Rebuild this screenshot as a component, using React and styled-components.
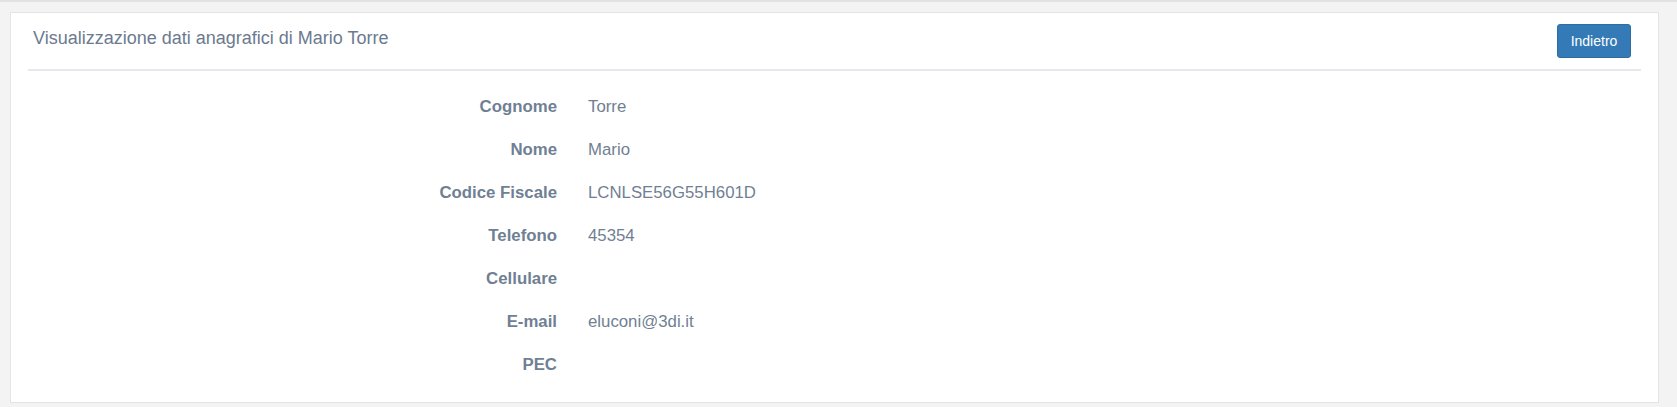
import React from "react";
import styled, { createGlobalStyle } from "styled-components";

const Global = createGlobalStyle`
  html, body {
    margin: 0;
    padding: 0;
    background: #f3f3f3;
    font-family: "Liberation Sans", Arial, Helvetica, sans-serif;
  }
  * { box-sizing: border-box; }
`;

const Page = styled.div`
  border-top: 2px solid #e2e2e2;
  padding: 10px 18px 4px 10px;
`;

const Panel = styled.section`
  background: #ffffff;
  border: 1px solid #e4e4e4;
  padding: 0 17px 16px 17px;
`;

const Header = styled.header`
  display: flex;
  align-items: flex-start;
  justify-content: space-between;
  padding: 11px 10px 11px 5px;
  border-bottom: 2px solid #e5e9ee;
`;

const Title = styled.h3`
  margin: 4px 0 0 0;
  font-size: 18px;
  line-height: 20px;
  font-weight: 400;
  color: #6b7a8f;
`;

const Button = styled.button`
  height: 34px;
  width: 74px;
  padding: 0;
  font-family: inherit;
  font-size: 14px;
  color: #ffffff;
  background: #337ab7;
  border: 1px solid #2e6da4;
  border-radius: 3px;
  cursor: pointer;
`;

const Body = styled.div`
  padding-top: 14px;
`;

const Row = styled.div`
  display: grid;
  grid-template-columns: 529px 1fr;
  column-gap: 31px;
  align-items: center;
  height: 43px;
  font-size: 16.8px;
`;

const Label = styled.div`
  text-align: right;
  font-weight: 700;
  color: #6f7f94;
`;

const Value = styled.div`
  color: #717f92;
`;

const fields = [
  ["Cognome", "Torre"],
  ["Nome", "Mario"],
  ["Codice Fiscale", "LCNLSE56G55H601D"],
  ["Telefono", "45354"],
  ["Cellulare", ""],
  ["E-mail", "eluconi@3di.it"],
  ["PEC", ""],
];

export default function App() {
  return (
    <>
      <Global />
      <Page>
        <Panel>
          <Header>
            <Title>Visualizzazione dati anagrafici di Mario Torre</Title>
            <Button type="button">Indietro</Button>
          </Header>
          <Body>
            {fields.map(([label, value]) => (
              <Row key={label}>
                <Label>{label}</Label>
                <Value>{value}</Value>
              </Row>
            ))}
          </Body>
        </Panel>
      </Page>
    </>
  );
}
